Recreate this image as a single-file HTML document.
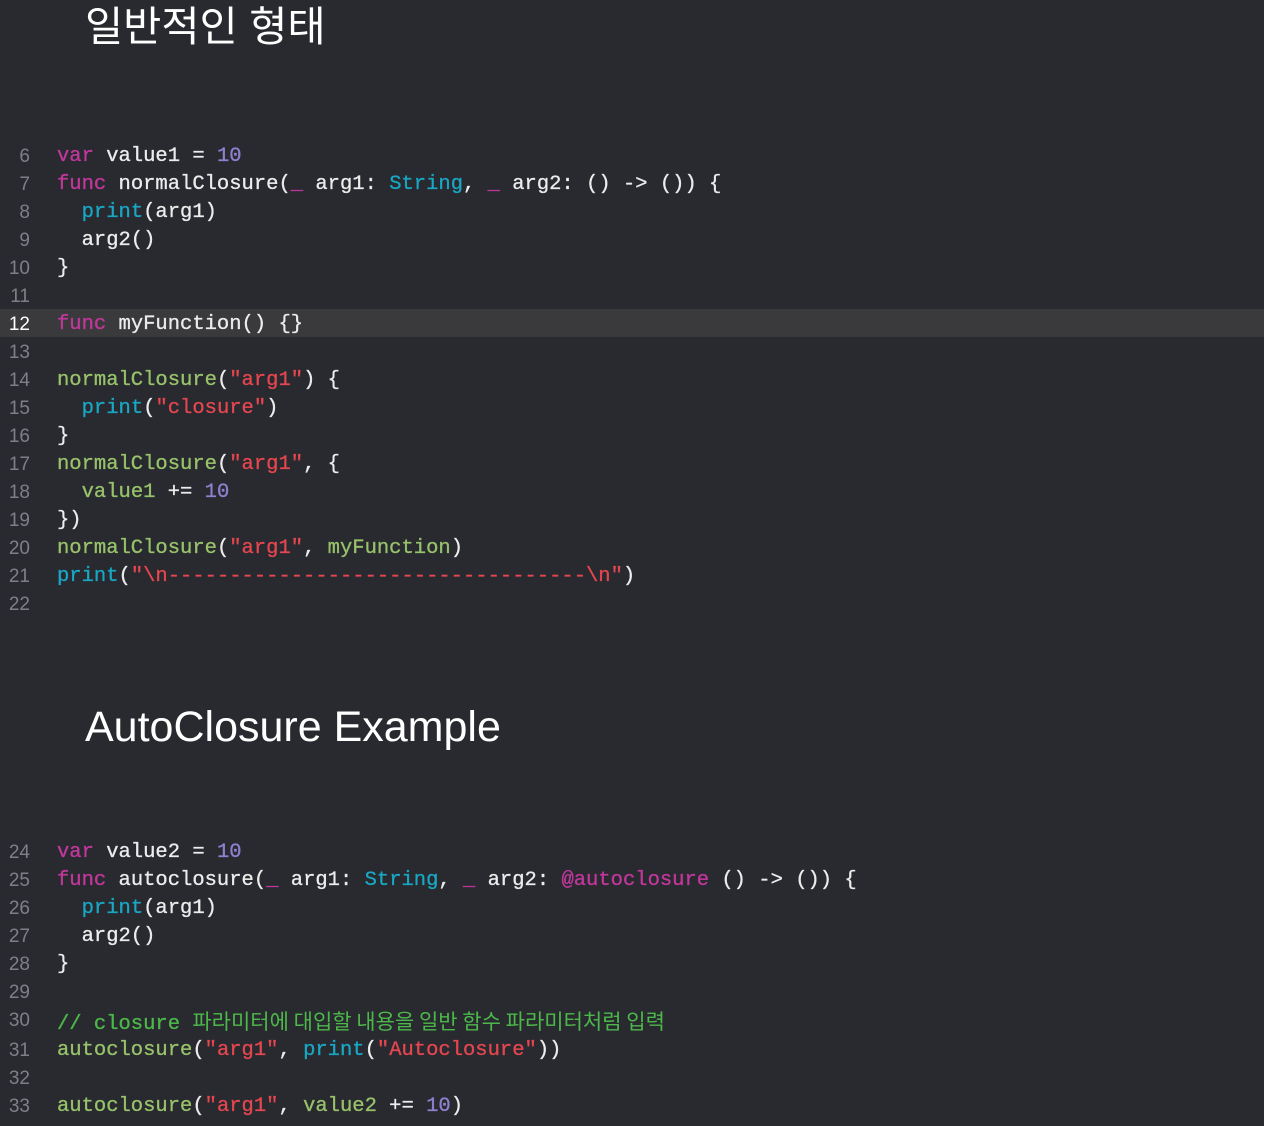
<!DOCTYPE html>
<html><head><meta charset="utf-8"><style>
html,body{margin:0;padding:0;background:#292a30;width:1264px;height:1126px;overflow:hidden;}
body{position:relative;font-family:"Liberation Mono","Noto Sans CJK KR",monospace;}
.h{position:absolute;left:85px;color:#fff;font-family:"Liberation Sans","Noto Sans CJK KR",sans-serif;font-size:43px;line-height:50px;white-space:nowrap;}
.l{position:absolute;left:0;width:1264px;height:28px;line-height:28px;font-size:20.5px;color:#ececec;white-space:pre;-webkit-text-stroke:0.3px;}
.n{position:absolute;top:2px;left:0;width:30px;text-align:right;color:#7f8087;font-size:19px;font-family:"Liberation Sans",sans-serif;-webkit-text-stroke:0;}
.c{position:absolute;top:2px;left:57px;}
.hl{background:#3a3a3c;}
.hl .n{color:#fff;}
.k{color:#c2379c}.s{color:#e5464f}.m{color:#8f81d0}.t{color:#19a7c4}.g{color:#98c26a}.cm{color:#4cb849}
.kr{font-family:"Noto Sans CJK KR",sans-serif;font-size:21px;-webkit-text-stroke:0;}
</style></head><body>
<div class="h" style="top:2px;font-size:41.5px">일반적인 형태</div>
<div class="h" style="top:702px">AutoClosure Example</div>

<div class="l" style="top:141px"><span class="n">6</span><span class="c"><span class="k">var</span> value1 = <span class="m">10</span></span></div>
<div class="l" style="top:169px"><span class="n">7</span><span class="c"><span class="k">func</span> normalClosure(<span class="k">_</span> arg1: <span class="t">String</span>, <span class="k">_</span> arg2: () -&gt; ()) {</span></div>
<div class="l" style="top:197px"><span class="n">8</span><span class="c">  <span class="t">print</span>(arg1)</span></div>
<div class="l" style="top:225px"><span class="n">9</span><span class="c">  arg2()</span></div>
<div class="l" style="top:253px"><span class="n">10</span><span class="c">}</span></div>
<div class="l" style="top:281px"><span class="n">11</span></div>
<div class="l hl" style="top:309px"><span class="n">12</span><span class="c"><span class="k">func</span> myFunction() {}</span></div>
<div class="l" style="top:337px"><span class="n">13</span></div>
<div class="l" style="top:365px"><span class="n">14</span><span class="c"><span class="g">normalClosure</span>(<span class="s">"arg1"</span>) {</span></div>
<div class="l" style="top:393px"><span class="n">15</span><span class="c">  <span class="t">print</span>(<span class="s">"closure"</span>)</span></div>
<div class="l" style="top:421px"><span class="n">16</span><span class="c">}</span></div>
<div class="l" style="top:449px"><span class="n">17</span><span class="c"><span class="g">normalClosure</span>(<span class="s">"arg1"</span>, {</span></div>
<div class="l" style="top:477px"><span class="n">18</span><span class="c">  <span class="g">value1</span> += <span class="m">10</span></span></div>
<div class="l" style="top:505px"><span class="n">19</span><span class="c">})</span></div>
<div class="l" style="top:533px"><span class="n">20</span><span class="c"><span class="g">normalClosure</span>(<span class="s">"arg1"</span>, <span class="g">myFunction</span>)</span></div>
<div class="l" style="top:561px"><span class="n">21</span><span class="c"><span class="t">print</span>(<span class="s">"\n----------------------------------\n"</span>)</span></div>
<div class="l" style="top:589px"><span class="n">22</span></div>

<div class="l" style="top:837px"><span class="n">24</span><span class="c"><span class="k">var</span> value2 = <span class="m">10</span></span></div>
<div class="l" style="top:865px"><span class="n">25</span><span class="c"><span class="k">func</span> autoclosure(<span class="k">_</span> arg1: <span class="t">String</span>, <span class="k">_</span> arg2: <span class="k">@autoclosure</span> () -&gt; ()) {</span></div>
<div class="l" style="top:893px"><span class="n">26</span><span class="c">  <span class="t">print</span>(arg1)</span></div>
<div class="l" style="top:921px"><span class="n">27</span><span class="c">  arg2()</span></div>
<div class="l" style="top:949px"><span class="n">28</span><span class="c">}</span></div>
<div class="l" style="top:977px"><span class="n">29</span></div>
<div class="l" style="top:1005px"><span class="n">30</span><span class="c cm">// closure <span class="kr">파라미터에 대입할 내용을 일반 함수 파라미터처럼 입력</span></span></div>
<div class="l" style="top:1035px"><span class="n">31</span><span class="c"><span class="g">autoclosure</span>(<span class="s">"arg1"</span>, <span class="t">print</span>(<span class="s">"Autoclosure"</span>))</span></div>
<div class="l" style="top:1063px"><span class="n">32</span></div>
<div class="l" style="top:1091px"><span class="n">33</span><span class="c"><span class="g">autoclosure</span>(<span class="s">"arg1"</span>, <span class="g">value2</span> += <span class="m">10</span>)</span></div>
</body></html>
